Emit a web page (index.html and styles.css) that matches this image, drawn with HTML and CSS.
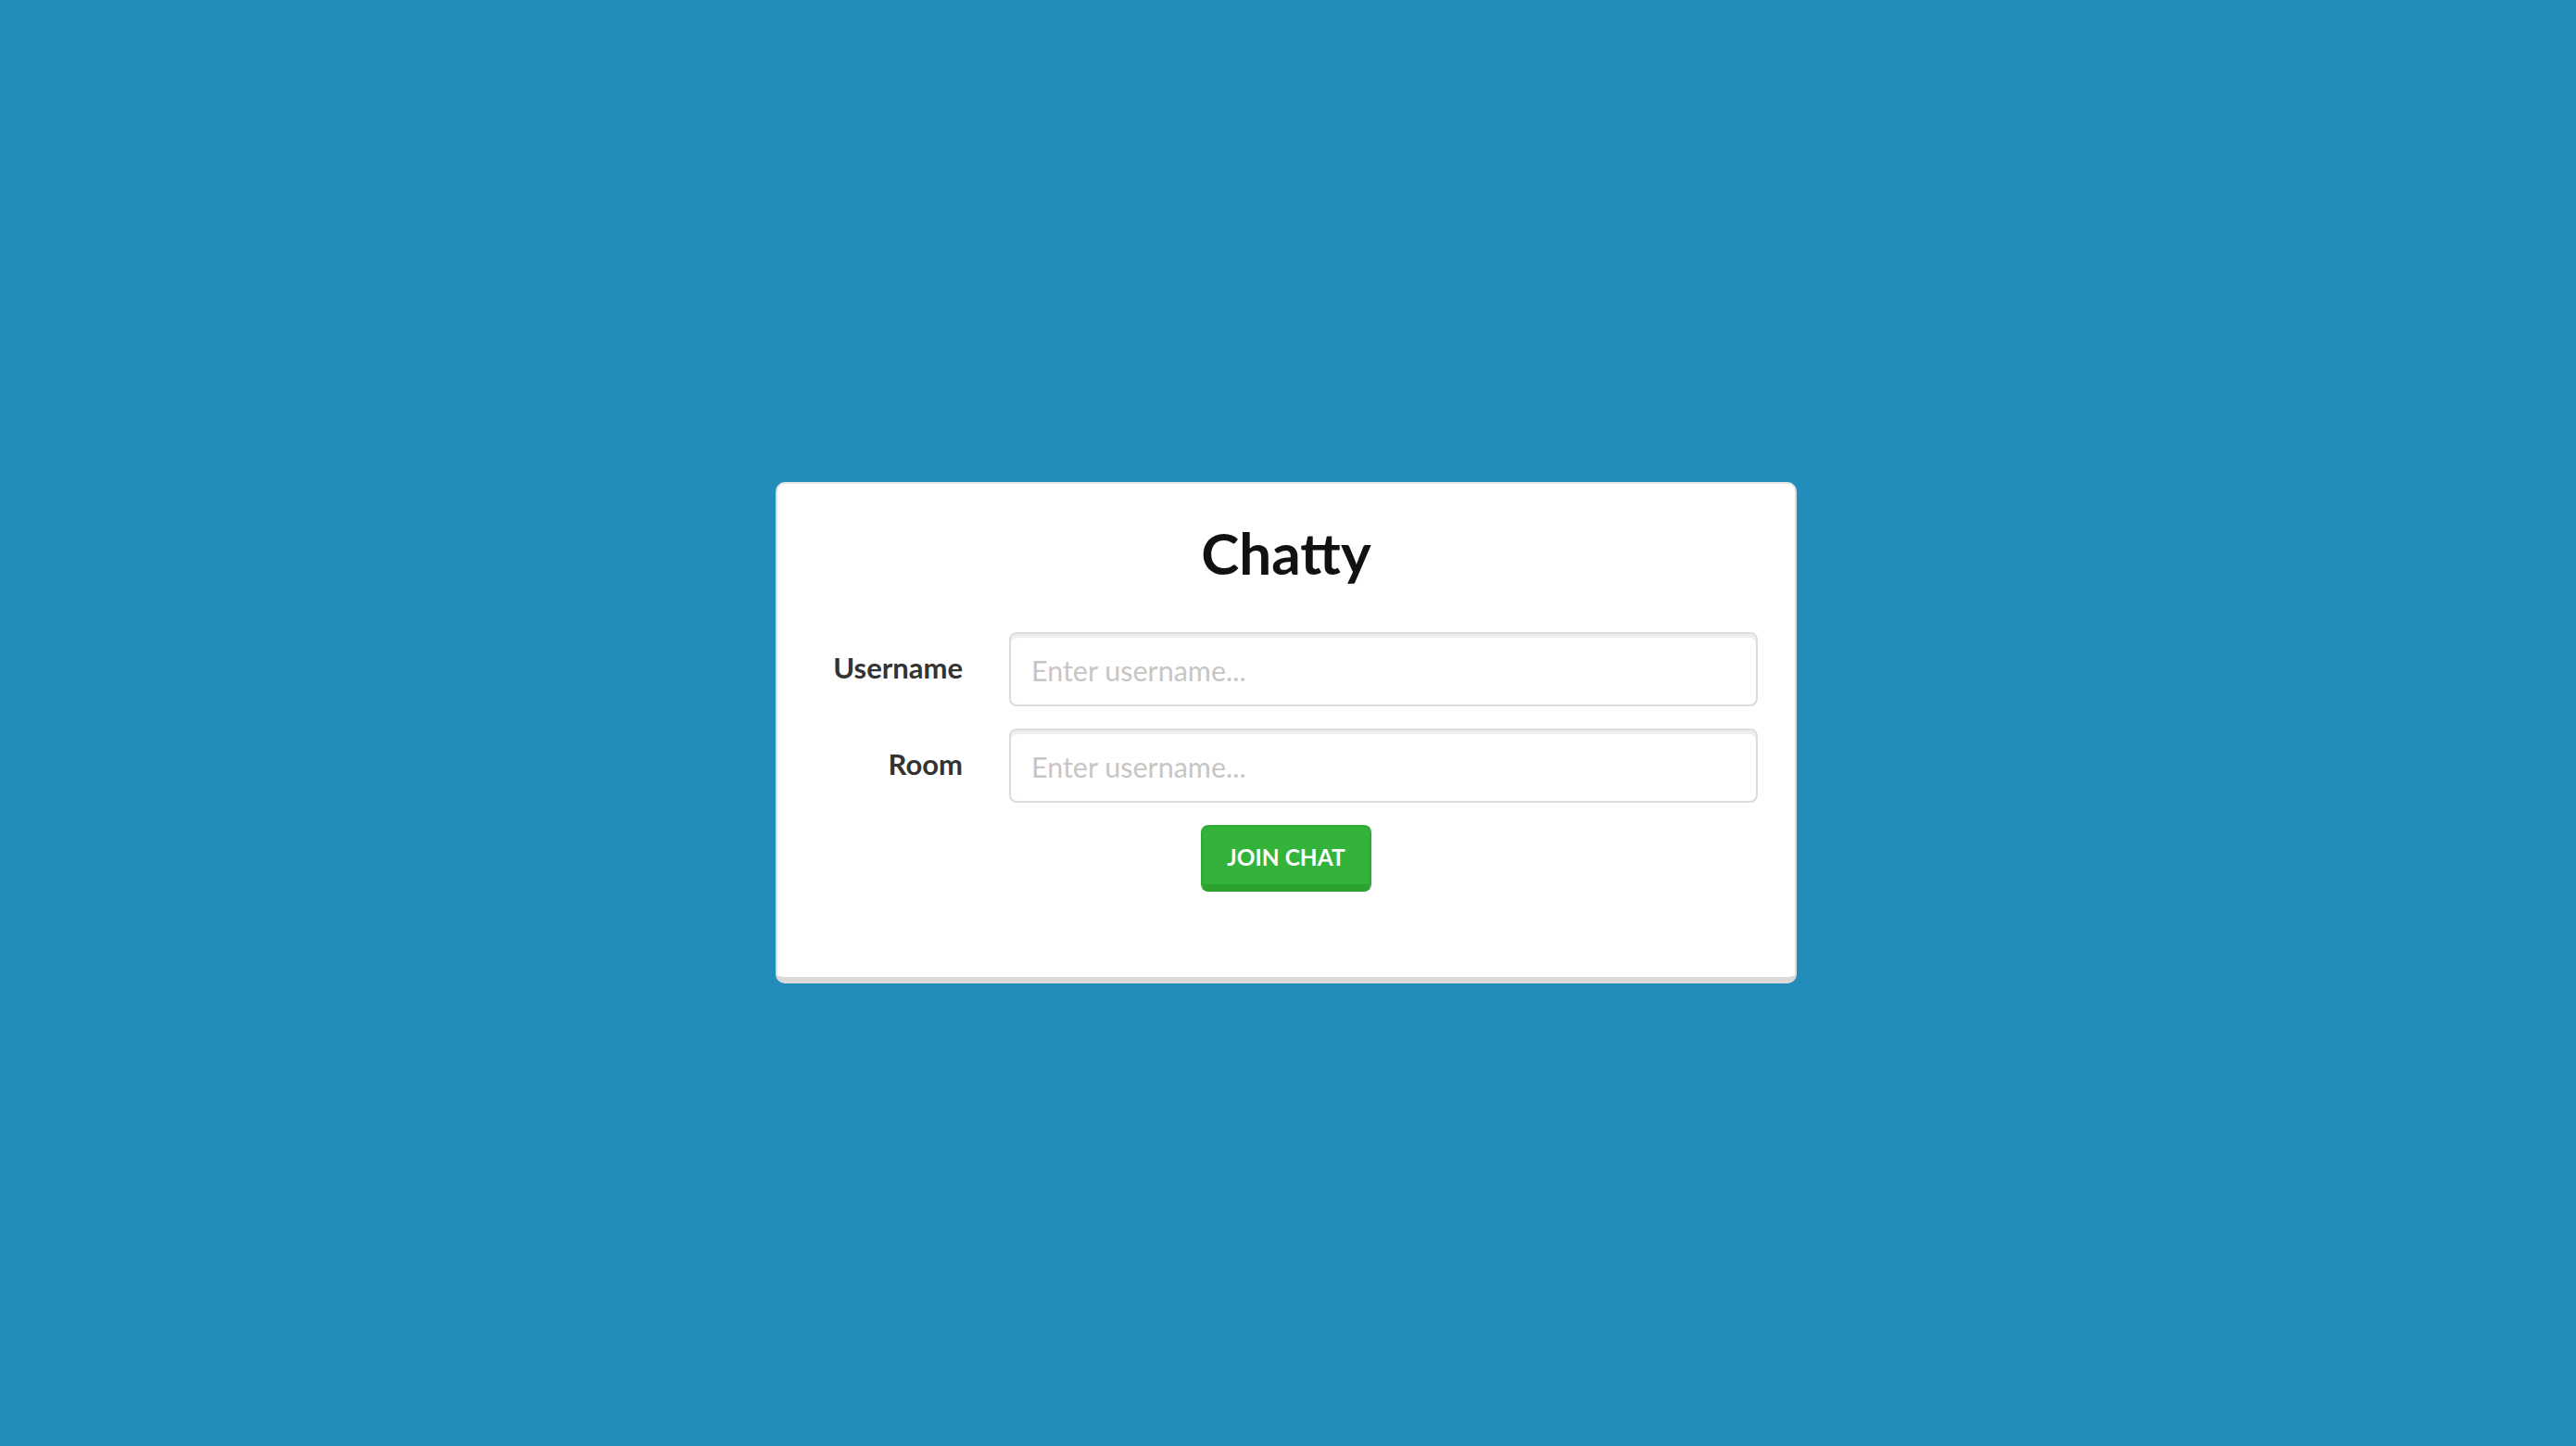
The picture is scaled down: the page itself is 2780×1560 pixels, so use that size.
FILE: index.html
```html
<!DOCTYPE html>
<html lang="en">
<head>
<meta charset="utf-8">
<title>Chatty</title>
<link rel="stylesheet" href="styles.css">
</head>
<body>
<main class="page">
  <section class="card">
    <h1 class="title">Chatty</h1>
    <form class="form">
      <div class="row">
        <label class="label" for="username">Username</label>
        <input class="field" id="username" type="text" placeholder="Enter username...">
      </div>
      <div class="row">
        <label class="label" for="room">Room</label>
        <input class="field" id="room" type="text" placeholder="Enter username...">
      </div>
      <div class="actions">
        <button class="btn" type="button">JOIN CHAT</button>
      </div>
    </form>
  </section>
</main>
</body>
</html>
```

FILE: styles.css
```css
html, body {
  margin: 0;
  padding: 0;
}
body {
  background: #228dbb;
  font-family: Lato, "Open Sans", "Liberation Sans", sans-serif;
  min-height: 1560px;
}
.page {
  display: flex;
  justify-content: center;
  padding-top: 520px;
}
.card {
  box-sizing: border-box;
  width: 1102px;
  margin-left: -4px;
  background: #fff;
  border: 2px solid #dedede;
  border-top-color: #e6e6e6;
  border-bottom: 7px solid #d9d9d9;
  border-radius: 10px;
  padding: 0 40px 92px 40px;
}
.title {
  margin: 0;
  padding-top: 34px;
  height: 126px;
  text-align: center;
  font-size: 62px;
  font-weight: 700;
  color: #111;
  line-height: 80px;
}
.form {
  display: flex;
  flex-direction: column;
  gap: 24px;
}
.row {
  display: grid;
  grid-template-columns: 160px 808px;
  column-gap: 50px;
  align-items: center;
}
.label {
  text-align: right;
  font-size: 31px;
  font-weight: 700;
  color: #333;
  padding-bottom: 4px;
}
.field {
  box-sizing: border-box;
  width: 808px;
  height: 80px;
  border: 2px solid #dcdcdc;
  border-radius: 8px;
  box-shadow: inset 0 4px 0 #ededed;
  padding: 2px 22px 0 22px;
  font-family: inherit;
  font-size: 30.5px;
  color: #333;
  background: #fff;
  outline: none;
}
.field::placeholder {
  color: #c6c6c6;
}
.actions {
  display: flex;
  justify-content: center;
}
.btn {
  box-sizing: border-box;
  width: 184px;
  height: 72px;
  background: #33b33a;
  border: 2px solid #2fa935;
  border-bottom: 8px solid #2da12f;
  border-radius: 8px;
  color: #fff;
  font-family: inherit;
  font-size: 24.5px;
  font-weight: 700;
  padding: 2px 0 0 0;
  cursor: pointer;
}
```
